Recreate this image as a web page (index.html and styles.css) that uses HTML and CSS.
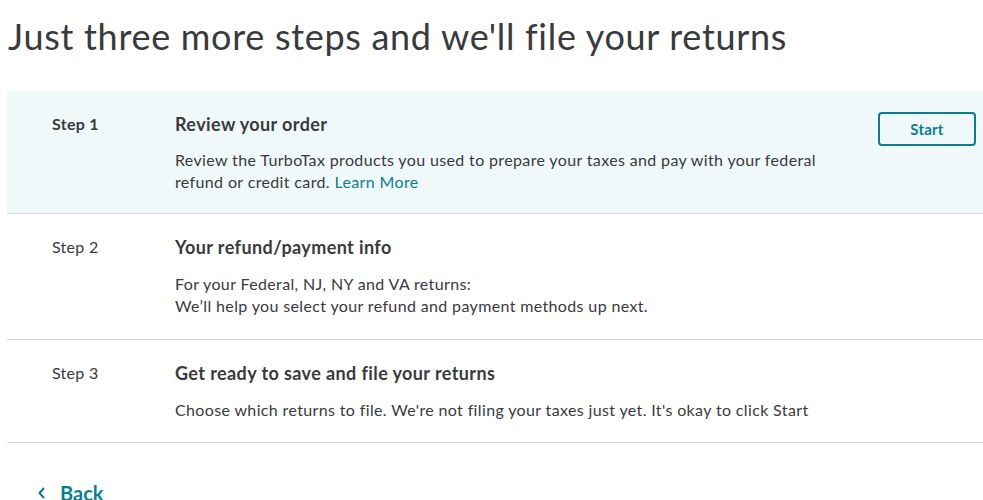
FILE: index.html
```html
<!DOCTYPE html>
<html>
<head>
<meta charset="utf-8">
<link rel="stylesheet" href="styles.css">
</head>
<body>
<div class="page">
  <h1 class="title">Just three more steps and we'll file your returns</h1>
  <div class="steps">
    <div class="step step-active">
      <div class="step-label">Step 1</div>
      <div class="step-body">
        <div class="step-title">Review your order</div>
        <p class="step-text">Review the TurboTax products you used to prepare your taxes and pay with your federal<br>refund or credit card. <a class="link" href="#">Learn More</a></p>
      </div>
      <div class="step-action"><button class="btn">Start</button></div>
    </div>
    <div class="step step-mid">
      <div class="step-label">Step 2</div>
      <div class="step-body">
        <div class="step-title">Your refund/payment info</div>
        <p class="step-text">For your Federal, NJ, NY and VA returns:<br>We’ll help you select your refund and payment methods up next.</p>
      </div>
      <div class="step-action"></div>
    </div>
    <div class="step">
      <div class="step-label">Step 3</div>
      <div class="step-body">
        <div class="step-title">Get ready to save and file your returns</div>
        <p class="step-text">Choose which returns to file. We're not filing your taxes just yet. It's okay to click Start</p>
      </div>
      <div class="step-action"></div>
    </div>
  </div>
  <a class="back" href="#"><svg class="back-icon" width="10" height="14" viewBox="0 0 10 14"><path d="M7 2 L2.5 7 L7 12" fill="none" stroke="#0a7e8c" stroke-width="2"/></svg><span>Back</span></a>
</div>
</body>
</html>
```
FILE: styles.css
```css
html, body { margin: 0; padding: 0; background: #fff; }
body { font-family: Lato, "Noto Sans", sans-serif; color: #393a3d; }
.page { padding-left: 7px; }
.title {
  margin: 0;
  padding: 14px 0 0 1px;
  height: 91px;
  box-sizing: border-box;
  font-size: 36px;
  line-height: 44px;
  font-weight: 400;
  letter-spacing: 0.7px;
  color: #393a3d;
}
.steps { display: flex; flex-direction: column; }
.step {
  display: grid;
  grid-template-columns: 123px 1fr auto;
  padding: 21px 7px 21px 45px;
  border-bottom: 1px solid #d4d7dc;
}
.step-active { background: #f0f9fa; padding-bottom: 20px; }
.step-mid { padding-bottom: 22px; }
.step-label { font-size: 16px; line-height: 24px; letter-spacing: 0.3px; }
.step-active .step-label { font-weight: 700; }
.step-title { font-size: 18px; line-height: 24px; font-weight: 700; letter-spacing: 0.4px; }
.step-text { margin: 13px 0 0; font-size: 16px; line-height: 22px; letter-spacing: 0.36px; }
.step + .step .step-text { margin-top: 14px; }
.link { color: #0a7e8c; text-decoration: none; }
.btn {
  width: 98px; height: 34px;
  border: 2px solid #0a7e8c; border-radius: 4px;
  background: transparent; color: #0a7e8c;
  font-family: inherit; font-size: 15px; font-weight: 700;
  letter-spacing: 0.2px;
  cursor: pointer;
}
.back {
  display: inline-flex; align-items: center; gap: 13px;
  margin: 37px 0 0 30px;
  color: #0a7e8c; text-decoration: none;
  font-size: 20px; font-weight: 700; line-height: 26px;
}
```
